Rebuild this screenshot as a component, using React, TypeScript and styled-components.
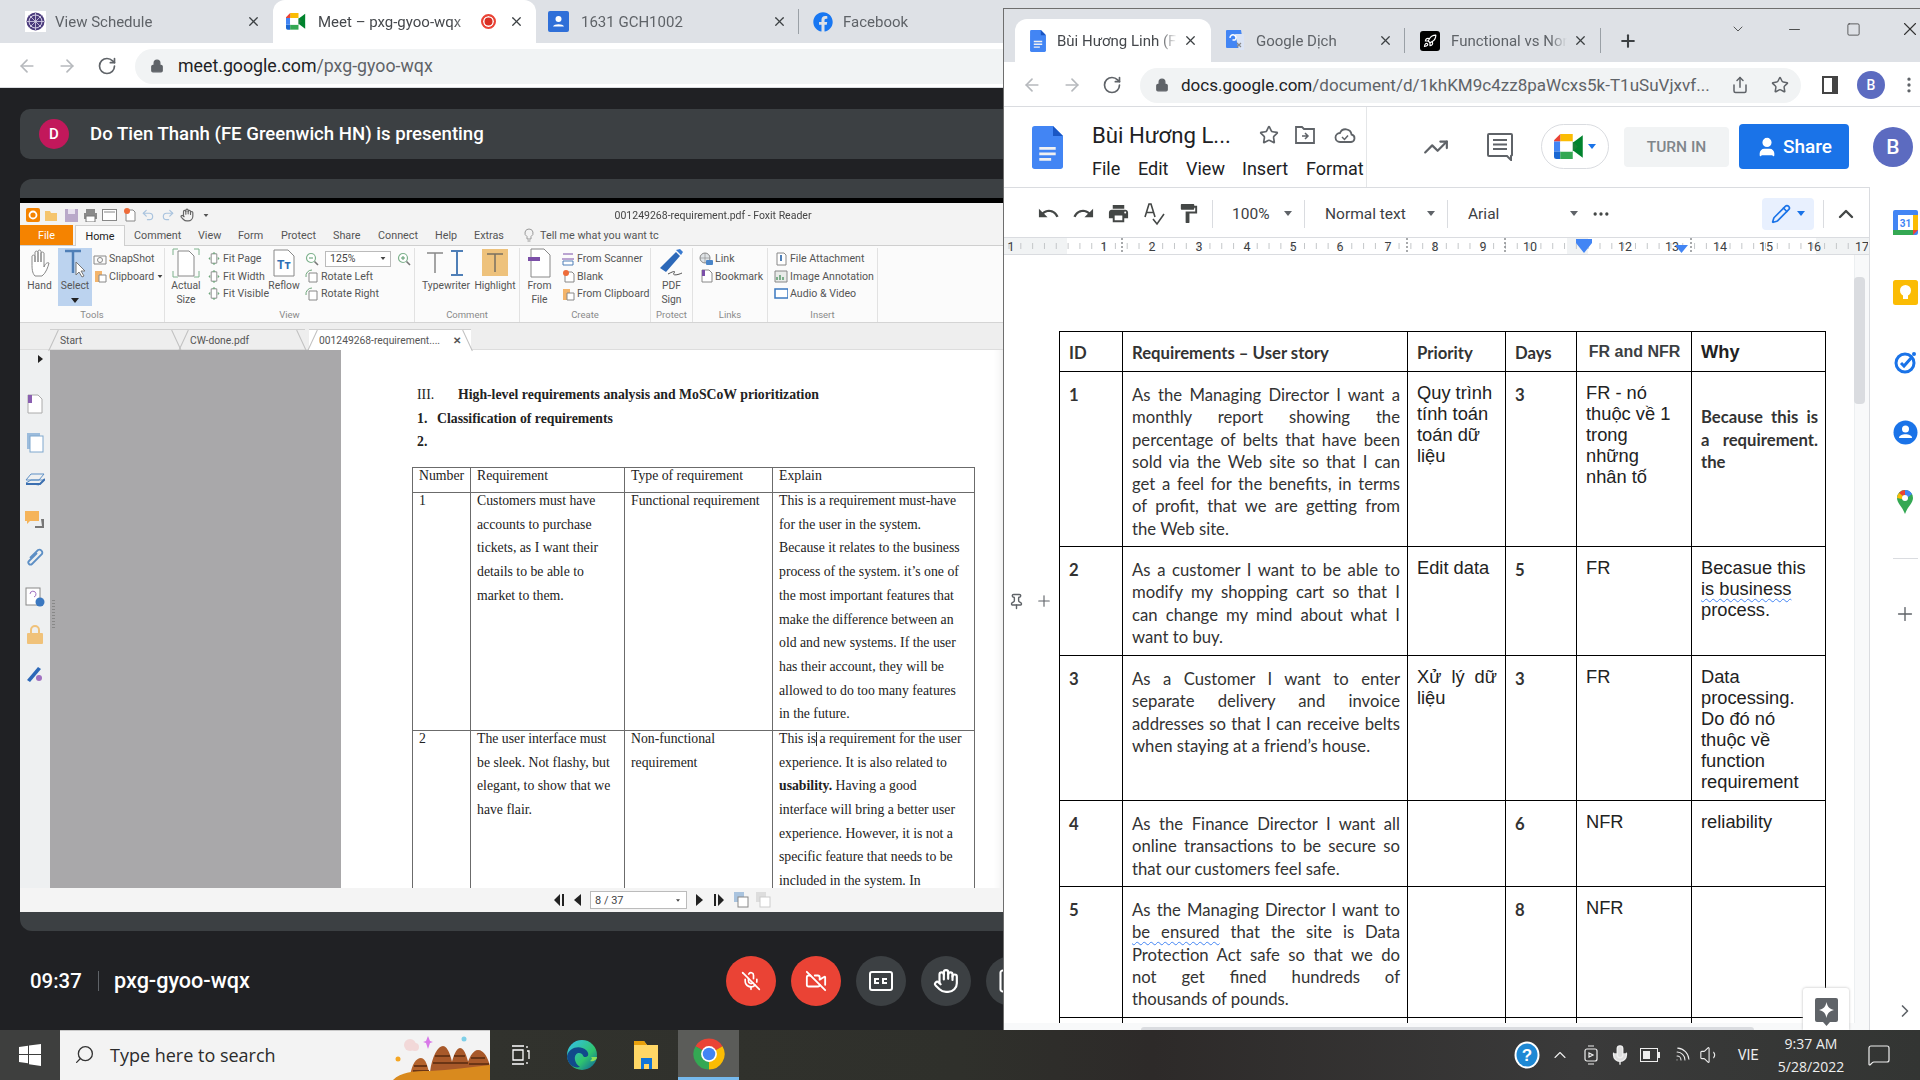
import React from "react";
import styled, { createGlobalStyle } from "styled-components";
import {
  ArrowLeft, ArrowRight, RotateCw, Lock, X, Plus, ChevronDown, ChevronUp, ChevronRight, Minus, Square, Star, Share,
  MoreVertical, MoreHorizontal, Undo2, Redo2, TrendingUp, MicOff, VideoOff, Hand, Pencil, Search, Pin,
  Rocket, User, Mic, Wifi, Volume1, MessageSquare,
} from "lucide-react";
import { FaFacebook } from "react-icons/fa";

const Global = createGlobalStyle`
  html, body { margin: 0; padding: 0; width: 1920px; height: 1080px; overflow: hidden; background: #202124; }
  * { box-sizing: border-box; }
  #root { width: 1920px; height: 1080px; font-family: Roboto, "Liberation Sans", sans-serif; }
`;

const Desktop = styled.div`position: relative; width: 1920px; height: 1080px; display: flex; flex-direction: column; overflow: hidden;`;
const WorkArea = styled.div`flex: 0 0 1030px; display: flex; flex-direction: column;`;

/* ---------- Chrome parts ---------- */
const TabStrip = styled.div<{ $h: number; $pl: number; $pt: number }>`
  height: ${p => p.$h}px; padding: ${p => p.$pt}px 0 0 ${p => p.$pl}px; background: #dee1e6; display: flex; align-items: stretch; flex: none;
`;
const Tab = styled.div<{ $w: number; $active?: boolean; $sep?: boolean; $fav: number; $close: number }>`
  position: relative; width: ${p => p.$w}px; display: flex; align-items: center; flex: none; padding-left: ${p => p.$fav}px; padding-right: ${p => p.$close}px;
  background: ${p => (p.$active ? "#fff" : "transparent")}; border-radius: 12px 12px 0 0;
  color: ${p => (p.$active ? "#45484c" : "#5f6368")}; font-size: 15px;
  ${p => p.$sep ? "&::after{content:'';position:absolute;right:0;top:9px;bottom:9px;width:1px;background:#9aa0a6;}" : ""}
`;
const TabTitle = styled.span<{ $gap: number }>`flex: 1; min-width: 0; margin-left: ${p => p.$gap}px; white-space: nowrap; overflow: hidden; -webkit-mask-image: linear-gradient(90deg, #000 85%, transparent); mask-image: linear-gradient(90deg, #000 85%, transparent);`;
const TabClose = styled(X).attrs({ size: 15, strokeWidth: 2 })`color: #3c4043; flex: none; margin-left: 6px;`;
const RecDot = styled.span`flex: none; width: 15px; height: 15px; border-radius: 50%; background: #d93025; border: 2px solid #ea4335; box-shadow: inset 0 0 0 1.5px #fff; margin: 0 7px 0 4px;`;
const NavBar = styled.div<{ $h: number; $pl: number }>`
  height: ${p => p.$h}px; flex: none; background: #fff; display: flex; align-items: center; padding: 2px 0 0 ${p => p.$pl}px; color: #5f6368; border-bottom: 1px solid #dadce0;
`;
const NavBtn = styled.span<{ $w: number; $faint?: boolean }>`
  width: ${p => p.$w}px; flex: none; display: flex; align-items: center; justify-content: center; color: ${p => (p.$faint ? "#b6b9bd" : "#5f6368")};
`;
const Omnibox = styled.div<{ $w: number; $ml: number }>`
  width: ${p => p.$w}px; margin-left: ${p => p.$ml}px; height: 35px; flex: none; border-radius: 18px; background: #f1f3f4; display: flex; align-items: center; padding-left: 15px; padding-right: 12px;
`;
const Url = styled.span<{ $ml: number; $fs: number }>`margin-left: ${p => p.$ml}px; font-size: ${p => p.$fs}px; color: #5f6368; white-space: nowrap; flex: 1; min-width: 0; overflow: hidden; b { font-weight: 400; color: #202124; }`;
const OmniEnd = styled.span<{ $ml?: number }>`display: flex; align-items: center; color: #5f6368; margin-left: ${p => p.$ml || 0}px;`;

/* ---------- Meet ---------- */
const MeetBody = styled.div`flex: 1; background: #202124; display: flex; flex-direction: column; padding: 21px 0 0 20px;`;
const PresenterBar = styled.div`
  height: 50px; flex: none; border-radius: 10px; background: #3c4043; display: flex; align-items: center; padding: 0 0 0 19px; color: #fff; font-size: 18.6px; font-weight: 500;
`;
const Avatar = styled.span<{ $bg: string; $size: number; $fs: number }>`
  width: ${p => p.$size}px; height: ${p => p.$size}px; flex: none; border-radius: 50%; background: ${p => p.$bg}; color: #fff; display: flex; align-items: center; justify-content: center; font-size: ${p => p.$fs}px; font-weight: 500;
`;
const PresenterText = styled.span`margin-left: 21px;`;
const SharePanel = styled.div`
  margin-top: 20px; height: 752px; flex: none; border-radius: 12px; background: #3c4043; padding: 19px 0 19px 0; overflow: hidden;
`;
const BottomBar = styled.div`flex: 1; display: flex; align-items: center; color: #fff; margin-left: -20px; padding-left: 30px;`;
const Clock = styled.span`font-size: 20.4px; font-weight: 500; width: 68px; flex: none;`;
const MeetDivider = styled.span`width: 1px; height: 20px; background: #5f6368; flex: none;`;
const MeetCode = styled.span`margin-left: 15px; font-size: 21.6px; font-weight: 500; width: 612px; flex: none; white-space: nowrap;`;
const RoundBtn = styled.span<{ $red?: boolean }>`
  width: 50px; height: 50px; flex: none; margin-right: 15px; border-radius: 50%; background: ${p => (p.$red ? "#ea4335" : "#3c4043")}; display: flex; align-items: center; justify-content: center; color: #fff;
`;

/* ---------- Foxit ---------- */
const FoxitWin = styled.div`
  height: 714px; border-top: 5px solid #000; background: #f3f3f3; display: flex; flex-direction: column; font-family: Roboto, sans-serif; color: #555; filter: blur(0.3px); width: 984px;
`;
const FoxTitleBar = styled.div`height: 22px; flex: none; display: flex; align-items: center; padding: 2px 0 0 3px; position: relative;`;
const QuickIcon = styled.span`width: 19.3px; display: flex; justify-content: center; flex: none;`;
const FoxTitle = styled.span`position: absolute; left: 0; width: 1386px; text-align: center; font-size: 10.5px; color: #444; white-space: nowrap;`;
const FoxMenu = styled.div`height: 21px; flex: none; display: flex; align-items: stretch; border-bottom: 1px solid #cfcfcf; font-size: 10.8px; color: #555;`;
const FileTab = styled.span`width: 53px; background: #f58300; color: #fff; display: flex; align-items: center; justify-content: center;`;
const HomeTab = styled.span`width: 50px; margin-left: 2px; background: #fbfbfb; border: 1px solid #cfcfcf; border-bottom: none; margin-bottom: -1px; display: flex; align-items: center; justify-content: center; color: #222;`;
const MenuItem = styled.span<{ $w: number }>`width: ${p => p.$w}px; flex: none; display: flex; align-items: center; padding-left: 9px;`;
const Ribbon = styled.div`height: 77px; flex: none; display: flex; background: #fbfbfb; border-bottom: 1px solid #d4d4d4;`;
const RGroup = styled.div<{ $w: number }>`width: ${p => p.$w}px; flex: none; display: flex; flex-direction: column; position: relative; border-right: 1px solid #e2e2e2; margin: 2px 0 0;`;
const RBody = styled.div`flex: none; height: 60px; display: flex; align-items: flex-start;`;
const RLabel = styled.div`height: 14px; font-size: 9.5px; color: #8a8a8a; text-align: center; line-height: 14px;`;
const BigBtn = styled.div<{ $w: number; $active?: boolean; $ml?: number }>`
  width: ${p => p.$w}px; margin-left: ${p => p.$ml || 0}px; height: 58px; flex: none; display: flex; flex-direction: column; align-items: center; font-size: 10.3px; line-height: 14px; color: #555; background: ${p => (p.$active ? "#bcd3ef" : "transparent")};
  text-align: center; white-space: nowrap; svg { height: 30px; flex: none; margin-bottom: 1px; }
`;
const SmallCol = styled.div<{ $w: number; $ml?: number }>`width: ${p => p.$w}px; margin-left: ${p => p.$ml || 0}px; flex: none; display: flex; flex-direction: column; padding-top: 2px;`;
const SmallRow = styled.div<{ $ic?: number }>`
  height: 17.6px; display: flex; align-items: center; font-size: 10.6px; color: #555; white-space: nowrap; gap: 2px;
  & > svg { width: ${p => p.$ic || 14}px; flex: none; }
`;
const ZoomSelect = styled.span`width: 66px; height: 16px; border: 1px solid #bbb; background: #fff; display: flex; align-items: center; justify-content: space-between; padding: 0 3px 0 4px; font-size: 10.5px; color: #444; margin: 0 4px;`;
const DocTabs = styled.div`height: 27px; flex: none; display: flex; align-items: flex-end; padding-left: 30px; background: #eeeeee; font-size: 10.3px; color: #555; border-bottom: 1px solid #ddd;`;
const DocTab = styled.span<{ $w: number; $active?: boolean; $ml?: number }>`
  position: relative; width: ${p => p.$w}px; height: 21px; margin-left: ${p => p.$ml || 0}px; flex: none; display: flex; align-items: center; padding-left: 10px; justify-content: space-between; padding-right: 10px; margin-bottom: -1px;
  background: ${p => (p.$active ? "#fff" : "transparent")}; white-space: nowrap;
  &::before { content: ""; position: absolute; left: 3px; top: -1px; height: 23px; width: 1px; background: #c0c0c0; transform: rotate(25deg); }
  &::after { content: ""; position: absolute; right: 3px; top: -1px; height: 23px; width: 1px; background: #c0c0c0; transform: rotate(-25deg); }
  border-top: 1px solid #cfcfcf;
`;
const Viewer = styled.div`flex: 1; min-height: 0; display: flex; overflow: hidden;`;
const FoxSide = styled.div`width: 30px; flex: none; background: #eef0f1; display: flex; flex-direction: column; align-items: center; padding-top: 5px;`;
const SideArrow = styled.span`width: 0; height: 0; border-left: 5px solid #222; border-top: 4px solid transparent; border-bottom: 4px solid transparent; margin: 0 0 22px 10px;`;
const SideIcon = styled.span`height: 38.5px; display: flex; align-items: center; justify-content: center; flex: none;`;
const GrayArea = styled.div`width: 291px; flex: none; background: #a9a8aa; position: relative; display: flex; align-items: center;`;
const GripDots = styled.span`width: 3px; height: 30px; margin-top: -8px; margin-left: 2px; background: repeating-linear-gradient(#888 0 1px, transparent 1px 3px);`;
const PdfPage = styled.div`flex: 1; min-width: 0; background: #fff; padding: 33px 0 0 70px; font-family: "Liberation Serif", serif; color: #222; font-size: 13.75px; overflow: hidden; box-shadow: inset -18px 0 10px -16px #e6e6e6;`;
const PdfHead = styled.div<{ $gap: number }>`height: 23.8px; display: flex; align-items: center; padding-left: 6px; font-weight: 700; white-space: nowrap; i { font-style: normal; font-weight: 400; width: ${p => p.$gap}px; flex: none; } b { width: ${p => p.$gap}px; flex: none; }`;
const PdfTable = styled.table`border-collapse: collapse; table-layout: fixed; width: 562px; margin: 13px 0 0 1px;`;
const PdfTd = styled.td`border: 1px solid #6b6b6b; padding: 0 5px 0 6px; vertical-align: top; white-space: nowrap;`;
const PdfRow = styled.tr<{ $h: number }>`height: ${p => p.$h}px;`;
const PdfLine = styled.span`display: block; height: 23.7px; line-height: 16px;`;
const ICursor = styled.span`display: inline-block; width: 1px; height: 14px; margin: 0 -1px -3px 0; background: #333;`;
const FoxStatus = styled.div`height: 24px; flex: none; background: #f4f4f4; display: flex; align-items: center; padding-left: 527px; color: #222;`;
const PageNav = styled.span<{ $w: number }>`width: ${p => p.$w}px; flex: none; display: flex; justify-content: center; align-items: center;`;
const PageSelect = styled.span`width: 97px; height: 18px; border: 1px solid #bbb; background: #fff; display: flex; align-items: center; justify-content: space-between; padding: 0 4px; font-size: 11px; color: #444; margin: 0 1px 0 3px;`;

/* ---------- Right window / Docs ---------- */
const RightWin = styled.div`
  position: absolute; left: 1003px; top: 8px; width: 917px; height: 1022px; display: flex; flex-direction: column; background: #fff; border-top: 1px solid #6e6e6e; border-left: 1px solid #6e6e6e; overflow: hidden;
`;
const NewTab = styled.span`margin-left: 17px; align-self: center; display: flex; color: #3c4043;`;
const WinCtl = styled.span<{ $ml: number }>`margin-left: ${p => p.$ml}px; align-self: flex-start; margin-top: -1px; height: 22px; display: flex; align-items: center; flex: none; color: #333;`;
const DocsHeader = styled.div`height: 81px; flex: none; display: flex; border-bottom: 1px solid #dadce0; background: #fff;`;
const DocsHeadLeft = styled.div`width: 363px; flex: none; display: flex; align-items: center; padding-left: 28px; border-right: 1px solid #e4e6e8; overflow: hidden;`;
const TitleBlock = styled.div`margin-left: 29px; padding-top: 5px; display: flex; flex-direction: column; flex: none;`;
const TitleRow = styled.div`display: flex; align-items: center; height: 34px; color: #202124; font-size: 22.2px; white-space: nowrap;`;
const TitleIcon = styled.span<{ $ml: number }>`margin-left: ${p => p.$ml}px; display: flex; color: #5f6368;`;
const MenuRow = styled.div`display: flex; margin-top: 4px; font-size: 18px; color: #202124; height: 26px; align-items: center;`;
const MenuWord = styled.span<{ $w: number }>`width: ${p => p.$w}px; flex: none;`;
const DocsHeadRight = styled.div`flex: 1; display: flex; align-items: center; padding-left: 56px; padding-bottom: 1px;`;
const HeadIcon = styled.span<{ $ml?: number }>`margin-left: ${p => p.$ml || 0}px; display: flex; color: #5f6368;`;
const MeetPill = styled.span`margin-left: 28px; width: 68px; height: 45px; border: 1px solid #dadce0; border-radius: 23px; display: flex; align-items: center; justify-content: center; gap: 4px; flex: none;`;
const CaretDown = styled.span<{ $c?: string }>`width: 0; height: 0; border-left: 4.5px solid transparent; border-right: 4.5px solid transparent; border-top: 5px solid ${p => p.$c || "#5f6368"}; flex: none;`;
const TurnIn = styled.span`margin-left: 15px; width: 105px; height: 40px; flex: none; border-radius: 4px; background: #f1f3f4; color: #80868b; display: flex; align-items: center; justify-content: center; font-size: 15.5px; font-weight: 500;`;
const ShareBtn = styled.span`margin-left: 10px; width: 110px; height: 45px; flex: none; border-radius: 4px; background: #1a73e8; color: #fff; display: flex; align-items: center; justify-content: center; gap: 5px; font-size: 19px; font-weight: 500;`;
const DocsMain = styled.div`flex: 1; min-height: 0; display: flex;`;
const DocsCol = styled.div`flex: 1; min-width: 0; display: flex; flex-direction: column;`;
const DocsToolbar = styled.div`height: 49px; flex: none; display: flex; align-items: center; padding: 2px 1px 0 27px; color: #444746; background: #fff;`;
const ToolBtn = styled.span<{ $w: number }>`width: ${p => p.$w}px; flex: none; display: flex; align-items: center; justify-content: center; color: #444746;`;
const ToolSep = styled.span<{ $ml?: number }>`width: 1px; height: 28px; background: #dadce0; flex: none; margin-left: ${p => p.$ml || 0}px;`;
const ToolSelect = styled.span<{ $w: number; $pl: number; $pr: number }>`
  width: ${p => p.$w}px; padding: 0 ${p => p.$pr}px 0 ${p => p.$pl}px; flex: none; display: flex; align-items: center; justify-content: space-between; font-size: 15.5px; color: #3c4043; white-space: nowrap;
`;
const PencilBox = styled.span`margin-left: auto; width: 52px; height: 32px; flex: none; background: #e8f0fe; border-radius: 4px; display: flex; align-items: center; justify-content: center; gap: 6px; color: #1a73e8;`;
const RulerBar = styled.div`height: 18px; flex: none; background: #f1f3f4; border-top: 1px solid #dadce0; border-bottom: 1px solid #dadce0;`;
const Scroller = styled.div`flex: 1; min-height: 0; position: relative; overflow: hidden; background: #fff; padding: 76px 0 0 55px;`;
const DocTable = styled.table`border-collapse: collapse; table-layout: fixed; width: 766px; color: #202124;`;
const Row = styled.tr<{ $h: number }>`height: ${p => p.$h}px;`;
const Cell = styled.td<{ $mid?: boolean }>`
  border: 1px solid #000; padding: 0; vertical-align: ${p => (p.$mid ? "middle" : "top")};
`;
const CalibriBox = styled.div<{ $bold?: boolean; $noPad?: boolean }>`
  font-family: Lato, sans-serif; font-size: 16.7px; line-height: 22.3px; padding: ${p => (p.$noPad ? "3px 8px 0 9px" : "12px 7px 0 9px")}; font-weight: ${p => (p.$bold ? 700 : 400)}; color: #333;
`;
const ArialBox = styled.div<{ $bold?: boolean; $center?: boolean; $noPad?: boolean; $size?: number; $gray?: boolean }>`
  font-family: "Liberation Sans", sans-serif; font-size: ${p => p.$size || 18.3}px; line-height: 21px; padding: ${p => (p.$noPad ? "0 8px 0 9px" : "10px 8px 0 9px")}; font-weight: ${p => (p.$bold ? 700 : 400)}; text-align: ${p => (p.$center ? "center" : "left")}; color: ${p => (p.$gray ? "#3c4043" : "#222")};
`;
const TLine = styled.span<{ $last?: boolean }>`display: block; text-align: ${p => (p.$last ? "left" : "justify")}; text-align-last: ${p => (p.$last ? "left" : "justify")};`;
const Squiggle = styled.span`text-decoration: underline wavy #4285f4 1px; text-underline-offset: 3px;`;
const ScrollThumb = styled.div`position: absolute; right: 4px; top: 22px; width: 11px; height: 127px; border-radius: 4px; background: #dadce0;`;
const ScrollTrack = styled.div`position: absolute; right: 0; top: 0; bottom: 0; width: 15px; background: #f8f9fa; border-left: 1px solid #eceff1;`;
const BottomTrack = styled.div`position: absolute; left: 0; right: 0; bottom: 0; height: 7px; background: #f8f9fa; display: flex; align-items: flex-end; padding-left: 137px;`;
const HThumb = styled.span`width: 613px; height: 3px; background: #dadce0; border-radius: 3px 3px 0 0;`;
const ExploreBtn = styled.div`position: absolute; right: 20px; bottom: 0; width: 46px; height: 42px; background: #fff; box-shadow: 0 0 3px #bbb; border-radius: 3px 3px 0 0; display: flex; justify-content: center; padding-top: 10px;`;
const GutterTools = styled.div`position: absolute; left: 4px; top: 337px; display: flex; align-items: center; gap: 10px; color: #5f6368;`;
const SidePanel = styled.div`width: 51px; flex: none; border-left: 1px solid #dadce0; display: flex; flex-direction: column; align-items: center; padding: 23px 0 0 20px; margin-top: -1px; background: #fff;`;
const SideApp = styled.span`height: 24px; margin-bottom: 46px; display: flex; align-items: center; justify-content: center; flex: none;`;
const SideDivider = styled.span`width: 25px; height: 1px; background: #dadce0; margin: -2px 0 43px; flex: none;`;
const SideChevron = styled.span`margin-top: auto; margin-bottom: 9px; display: flex; color: #5f6368;`;

/* ---------- Taskbar ---------- */
const Taskbar = styled.div`flex: 0 0 50px; display: flex; align-items: stretch; background: linear-gradient(90deg, #33342f 0%, #2f302b 50%, #2d2a29 60%, #3a3a3a 82%, #333533 100%); color: #fff;`;
const StartBtn = styled.span`width: 60px; flex: none; display: flex; align-items: center; justify-content: center; background: #3e3f3e;`;
const SearchBox = styled.div`width: 430px; flex: none; background: #f3f3f3; border-top: 1px solid #c8c8c8; display: flex; align-items: center; padding: 0 0 2px 14px; color: #333; font-size: 19px; position: relative; overflow: hidden;`;
const SearchText = styled.span`margin-left: 15px; font-family: "Open Sans", sans-serif; font-size: 18px; color: #2b2b2b;`;
const SearchArt = styled.span`position: absolute; right: 0; bottom: 0; display: flex;`;
const TaskApp = styled.span<{ $w: number; $active?: boolean }>`
  width: ${p => p.$w}px; flex: none; display: flex; align-items: center; justify-content: center; background: ${p => (p.$active ? "#5b5c59" : "transparent")}; border-bottom: ${p => (p.$active ? "3px solid #76b9ed" : "none")};
`;
const Tray = styled.div`margin-left: auto; display: flex; align-items: stretch; padding-right: 12px;`;
const TrayItem = styled.span<{ $w: number }>`width: ${p => p.$w}px; flex: none; display: flex; align-items: center; justify-content: center; color: #eee; font-size: 14px;`;
const TrayClock = styled.span`width: 78px; flex: none; display: flex; flex-direction: column; align-items: center; justify-content: center; gap: 5px; font-size: 14px; color: #eee; white-space: nowrap; font-family: "Open Sans", sans-serif; line-height: 18px;`;

/* ---------- Drawings ---------- */
const Sheet = styled.svg``;
const MeetLogo = ({ w = 24 }: { w?: number }) => (
  <Sheet width={w} height={(w * 20) / 24} viewBox="0 0 24 20">
    <path d="M5 0h10v6H5z" fill="#fbbc04" /><path d="M0 5 5 0v6H0z" fill="#ea4335" /><path d="M0 6h5v8H0z" fill="#4285f4" />
    <path d="M0 14h5v6H2a2 2 0 0 1-2-2z" fill="#1967d2" /><path d="M5 14h10v6H5z" fill="#34a853" />
    <path d="M15 7l8-6v18l-8-6z" fill="#00832d" /><rect x="5" y="6" width="10" height="8" fill="#fff" />
    <path d="M15 6v8l4-4z" fill="#188038" />
  </Sheet>
);
const DocsLogo = ({ w, h }: { w: number; h: number }) => (
  <Sheet width={w} height={h} viewBox="0 0 34 47">
    <path d="M3 0h20l11 11v33a3 3 0 0 1-3 3H3a3 3 0 0 1-3-3V3a3 3 0 0 1 3-3z" fill="#4285f4" /><path d="M23 0l11 11H23z" fill="#1a56c4" />
    <path d="M8 23h18v3H8zM8 29h18v3H8zM8 35h13v3H8z" fill="#f1f1f1" />
  </Sheet>
);
const ChromeLogo = ({ s = 32 }: { s?: number }) => (
  <Sheet width={s} height={s} viewBox="0 0 24 24">
    <path d="M12 12 2.47 6.5A11 11 0 0 1 21.53 6.5Z" fill="#ea4335" /><path d="M12 12 21.53 6.5A11 11 0 0 1 12 23Z" fill="#fbbc04" /><path d="M12 12 12 23A11 11 0 0 1 2.47 6.5Z" fill="#34a853" />
    <circle cx="12" cy="12" r="5.6" fill="#fff" /><circle cx="12" cy="12" r="4.4" fill="#4285f4" />
  </Sheet>
);
const WheelFav = () => (
  <Sheet width={21} height={21} viewBox="0 0 21 21"><rect width="21" height="21" fill="#fff" /><circle cx="10.5" cy="10.5" r="9" fill="#4a3a7c" /><circle cx="10.5" cy="10.5" r="6.5" fill="none" stroke="#d9d4ea" strokeWidth="1" /><path d="M10.5 2v17M2 10.5h17M4.5 4.5l12 12M16.5 4.5l-12 12" stroke="#d9d4ea" strokeWidth=".8" /></Sheet>
);
const ContactFav = () => (
  <Sheet width={21} height={21} viewBox="0 0 21 21"><rect width="21" height="21" rx="2" fill="#2f6fd8" /><circle cx="10.5" cy="8" r="3" fill="#fff" /><path d="M5 15.5c1-3 10-3 11 0z" fill="#fff" /></Sheet>
);
const TranslateFav = () => (
  <Sheet width={19} height={22} viewBox="0 0 19 22"><path d="M1 0h14l3 18H1a1 1 0 0 1-1-1V1a1 1 0 0 1 1-1z" fill="#4285f4" /><path d="M9 4h8a1 1 0 0 1 1 1v15l-5 0z" fill="#dbe4f5" /><path d="M4 8a3 3 0 1 1 5 2H6.5" fill="none" stroke="#fff" strokeWidth="1.4" /><path d="M11 13l4 4M15 13l-4 4" stroke="#888" strokeWidth="1.1" /></Sheet>
);
const PanelIcon = () => (<Sheet width={18} height={20} viewBox="0 0 18 20"><path d="M1 1h16v18H1zM3 3v14h8V3z" fill="#444" fillRule="evenodd" /></Sheet>);
const CommentIcon = () => (<Sheet width={26} height={28} viewBox="0 0 26 28"><path d="M2 1h22a1 1 0 0 1 1 1v20l-1 1v4l-4-4H2a1 1 0 0 1-1-1V2a1 1 0 0 1 1-1z" fill="none" stroke="#5f6368" strokeWidth="2" /><path d="M6 7h14M6 11.5h14M6 16h14" stroke="#5f6368" strokeWidth="2" /></Sheet>);
const SpellIcon = () => (<Sheet width={22} height={24} viewBox="0 0 22 24"><path d="M2 15 6 2h2l4 13M3.5 10.5h7M10 17l4 5 7-10" fill="none" stroke="#444746" strokeWidth="1.6" /></Sheet>);
const Mat = ({ d }: { d: string }) => (<Sheet width={23} height={23} viewBox="0 0 24 24"><path d={d} fill="#444746" /></Sheet>);
const UNDO = "M12.5 8c-2.65 0-5.05.99-6.9 2.6L2 7v9h9l-3.62-3.62c1.39-1.16 3.16-1.88 5.12-1.88 3.54 0 6.55 2.31 7.6 5.5l2.37-.78C21.08 11.03 17.15 8 12.5 8z";
const REDO = "M18.4 10.6C16.55 8.99 14.15 8 11.5 8c-4.65 0-8.58 3.03-9.96 7.22L3.9 16c1.05-3.19 4.05-5.5 7.6-5.5 1.95 0 3.73.72 5.12 1.88L13 16h9V7l-3.6 3.6z";
const PRINT = "M19 8H5c-1.66 0-3 1.34-3 3v6h4v4h12v-4h4v-6c0-1.66-1.34-3-3-3zm-3 11H8v-5h8v5zm3-7c-.55 0-1-.45-1-1s.45-1 1-1 1 .45 1 1-.45 1-1 1zm-1-9H6v4h12V3z";
const PAINT = "M18 4V3c0-.55-.45-1-1-1H5c-.55 0-1 .45-1 1v4c0 .55.45 1 1 1h12c.55 0 1-.45 1-1V6h1v4H9v11c0 .55.45 1 1 1h2c.55 0 1-.45 1-1v-9h8V4h-3z";
const RulerSvg = () => {
  const nums: [string, number][] = [["1", 7], ["1", 100], ["2", 148], ["3", 195], ["4", 243], ["5", 289], ["6", 336], ["7", 384], ["8", 431], ["9", 479], ["10", 526], ["12", 621], ["13", 668], ["14", 716], ["15", 762], ["16", 810], ["17", 858]];
  const ticks = Array.from({ length: 72 }, (_, i) => 5 + i * 11.82);
  return (
    <Sheet width={864} height={16} viewBox="0 0 864 16" style={{ display: "block" }}>
      <rect x="63" y="0" width="749" height="16" fill="#fff" /><rect x="563" width="21" height="16" fill="#f1f3f4" />
      {ticks.map(t => <path key={t} d={`M${t} 5v6`} stroke="#c4c7c9" strokeWidth="1" />)}
      {[118, 403, 501, 687].map(x => <path key={x} d={`M${x} 0v16`} stroke="#8a8d90" strokeWidth="1.5" strokeDasharray="2 2" />)}
      {nums.map(([n, x], i) => <text key={i} x={x} y="13" textAnchor="middle" fontFamily="Roboto, sans-serif" fontSize="12.5" fill="#3c4043">{n}</text>)}
      <path d="M572 1h16v4h-16zM572 5h16l-8 10z" fill="#4285f4" /><path d="M671 7h13l-6.500 8z" fill="#4285f4" />
    </Sheet>
  );
};
const Ic = {
  Hand: () => <svg width="28" viewBox="0 0 28 30"><path d="M6 16V8a1.700 1.700 0 0 1 3 0v6V4a1.700 1.700 0 0 1 3 0v10V3a1.700 1.700 0 0 1 3 0v11V5a1.700 1.700 0 0 1 3 0v14c1-3 3-5 5-4-1 4-3 10-7 13h-7c-3-3-3-8-3-12z" fill="#fff" stroke="#888" strokeWidth="1" /></svg>,
  Select: () => <svg width="28" viewBox="0 0 28 30"><path d="M4 3h16M12 3v22" stroke="#4f7fb7" strokeWidth="2.500" fill="none" /><path d="M15 14v13l3-3 3 5 2-1-3-5h4z" fill="#fff" stroke="#777" /></svg>,
  Page: () => <svg width="28" viewBox="0 0 28 30"><path d="M6 3h11l5 5v20H6z" fill="#fff" stroke="#888" /><path d="M1 7V1h5M27 7V1h-5M1 23v6h5M27 23v6h-5" stroke="#7fb28d" fill="none" /></svg>,
  Reflow: () => <svg width="28" viewBox="0 0 28 30"><path d="M4 2h14l6 6v20H4z" fill="#fff" stroke="#888" /><text x="7" y="21" fontSize="12" fontWeight="700" fill="#2e6fb5" fontFamily="Roboto">Tт</text></svg>,
  Typewriter: () => <svg width="44" viewBox="0 0 44 30"><path d="M3 5h16M11 5v20" stroke="#888" strokeWidth="1.500" /><path d="M27 3h12M27 27h12M33 3v24" stroke="#4f7fb7" strokeWidth="2" /></svg>,
  Highlight: () => <svg width="28" viewBox="0 0 28 30"><rect x="1" y="1" width="26" height="27" fill="#eec27c" /><path d="M6 6h16M14 6v18" stroke="#7a7060" strokeWidth="1.500" /></svg>,
  FromFile: () => <svg width="24" viewBox="0 0 24 30"><path d="M3 1h13l6 6v22H3z" fill="#fff" stroke="#888" /><rect x="0" y="9" width="12" height="4" fill="#7b4fa8" /></svg>,
  PdfSign: () => <svg width="28" viewBox="0 0 28 30"><path d="M2 20 18 4l4 4L8 24z" fill="#2c68b8" /><path d="M18 2l4-1 3 3-2 3z" fill="#3a7bd0" /><path d="M10 26c4-2 8-4 6-1s4 2 8 0" stroke="#555" fill="none" /></svg>,
  Snap: () => <svg viewBox="0 0 14 12" height="12"><path d="M1 3h12v8H1z" fill="none" stroke="#888" /><circle cx="7" cy="7" r="2.500" fill="none" stroke="#888" /></svg>,
  Clip: () => <svg viewBox="0 0 14 14" height="14"><path d="M2 2h7v11H2z" fill="#f3b46b" /><path d="M6 6h7v7H6z" fill="#fff" stroke="#888" /></svg>,
  Fit: () => <svg viewBox="0 0 14 14" height="13"><path d="M4 2h6v10H4z" fill="#fff" stroke="#888" /><path d="M1 7l2-2v4zM13 7l-2-2v4zM7 0l2 2H5zM7 14l2-2H5z" fill="#6fa67c" /></svg>,
  Rot: () => <svg viewBox="0 0 14 14" height="14"><path d="M4 4h8v9H4z" fill="#fff" stroke="#888" /><path d="M1 8a6 6 0 0 1 6-7" stroke="#6fa67c" fill="none" /></svg>,
  Zoom: ({ plus }: { plus?: boolean }) => <svg viewBox="0 0 14 14" width="14" height="14"><circle cx="6" cy="6" r="4.500" fill="#fff" stroke="#7eb28d" strokeWidth="1.200" /><path d="M9.500 9.500 13 13" stroke="#777" strokeWidth="1.600" /><path d={plus ? "M4 6h4M6 4v4" : "M4 6h4"} stroke="#5a9a6c" /></svg>,
  Scan: () => <svg viewBox="0 0 14 14" height="14"><path d="M2 2h10M1 7h12" stroke="#7b4fa8" /><path d="M2 9h10v4H2z" fill="#fff" stroke="#4f7fb7" /></svg>,
  Blank: () => <svg viewBox="0 0 14 14" height="14"><path d="M4 3h7l2 2v8H4z" fill="#fff" stroke="#888" /><circle cx="5" cy="4" r="3" fill="#ee6c3a" /></svg>,
  Link: () => <svg viewBox="0 0 14 14" height="14"><circle cx="6" cy="6" r="5" fill="#dfe3e6" stroke="#888" /><path d="M6 1v10M1 6h10" stroke="#888" strokeWidth=".6" /><rect x="7" y="8" width="7" height="5" rx="1" fill="#4a85c8" /></svg>,
  Mark: () => <svg viewBox="0 0 14 14" height="14"><path d="M3 1h7l3 3v9H3z" fill="#fff" stroke="#888" /><rect x="3" y="1" width="3" height="6" fill="#7b4fa8" /></svg>,
  Attach: () => <svg viewBox="0 0 14 14" height="14"><path d="M3 1h7l2 2v10H3z" fill="#fff" stroke="#888" /><path d="M7 3v6" stroke="#4f7fb7" strokeWidth="2" /></svg>,
  Img: () => <svg viewBox="0 0 14 14" height="14"><path d="M1 2h12v11H1z" fill="#e9ebe9" stroke="#888" /><path d="M3 11V8M6 11V6M9 11V8" stroke="#5a9a6c" strokeWidth="1.500" /></svg>,
  Av: () => <svg viewBox="0 0 14 14" height="14"><rect x="1" y="2" width="13" height="9" fill="#fff" stroke="#3b78c0" strokeWidth="1.500" /></svg>,
};

const body = (lines: React.ReactNode[]) => lines.map((l, i) => <TLine key={i} $last={i === lines.length - 1}>{l}</TLine>);
const pdfLines = (lines: React.ReactNode[]) => lines.map((l, i) => <PdfLine key={i}>{l}</PdfLine>);

const RibbonSection = () => (
  <Ribbon>
    <RGroup $w={145}>
      <RBody>
        <BigBtn $w={37} $ml={1}><Ic.Hand />Hand</BigBtn>
        <BigBtn $w={34} $active><Ic.Select />Select<CaretDown $c="#222" style={{ marginTop: 5 }} /></BigBtn>
        <SmallCol $w={70} $ml={1}>
          <SmallRow $ic={14}><Ic.Snap /> SnapShot</SmallRow>
          <SmallRow $ic={14}><Ic.Clip /> Clipboard <CaretDown $c="#444" style={{ transform: "scale(.6)" }} /></SmallRow>
        </SmallCol>
      </RBody>
      <RLabel>Tools</RLabel>
    </RGroup>
    <RGroup $w={250}>
      <RBody>
        <BigBtn $w={42}><Ic.Page />Actual<br />Size</BigBtn>
        <SmallCol $w={60}>
          <SmallRow><Ic.Fit /> Fit Page</SmallRow><SmallRow><Ic.Fit /> Fit Width</SmallRow><SmallRow><Ic.Fit /> Fit Visible</SmallRow>
        </SmallCol>
        <BigBtn $w={34}><Ic.Reflow />Reflow</BigBtn>
        <SmallCol $w={112} $ml={4}>
          <SmallRow><Ic.Zoom /><ZoomSelect>125%<CaretDown $c="#444" style={{ transform: "scale(.6)" }} /></ZoomSelect><Ic.Zoom plus /></SmallRow>
          <SmallRow><Ic.Rot /> Rotate Left</SmallRow><SmallRow><Ic.Rot /> Rotate Right</SmallRow>
        </SmallCol>
      </RBody>
      <RLabel>View</RLabel>
    </RGroup>
    <RGroup $w={105}>
      <RBody>
        <BigBtn $w={62}><Ic.Typewriter />Typewriter</BigBtn>
        <BigBtn $w={36}><Ic.Highlight />Highlight</BigBtn>
      </RBody>
      <RLabel>Comment</RLabel>
    </RGroup>
    <RGroup $w={131}>
      <RBody>
        <BigBtn $w={39}><Ic.FromFile />From<br />File</BigBtn>
        <SmallCol $w={90} $ml={2}>
          <SmallRow><Ic.Scan /> From Scanner</SmallRow><SmallRow><Ic.Blank /> Blank</SmallRow><SmallRow><Ic.Clip /> From Clipboard</SmallRow>
        </SmallCol>
      </RBody>
      <RLabel>Create</RLabel>
    </RGroup>
    <RGroup $w={42}>
      <RBody><BigBtn $w={41}><Ic.PdfSign />PDF<br />Sign</BigBtn></RBody>
      <RLabel>Protect</RLabel>
    </RGroup>
    <RGroup $w={75}>
      <RBody><SmallCol $w={72} $ml={6}><SmallRow><Ic.Link /> Link</SmallRow><SmallRow><Ic.Mark /> Bookmark</SmallRow></SmallCol></RBody>
      <RLabel>Links</RLabel>
    </RGroup>
    <RGroup $w={110}>
      <RBody><SmallCol $w={105} $ml={6}><SmallRow><Ic.Attach /> File Attachment</SmallRow><SmallRow><Ic.Img /> Image Annotation</SmallRow><SmallRow><Ic.Av /> Audio &amp; Video</SmallRow></SmallCol></RBody>
      <RLabel>Insert</RLabel>
    </RGroup>
  </Ribbon>
);

const FoxitSection = () => (
  <FoxitWin>
    <FoxTitleBar>
      <QuickIcon><svg width="14" height="14" viewBox="0 0 14 14"><rect width="14" height="14" rx="2" fill="#f58300" /><circle cx="7" cy="7" r="3.500" fill="none" stroke="#fff" strokeWidth="1.800" /></svg></QuickIcon>
      <QuickIcon><svg width="15" height="13" viewBox="0 0 15 13"><path d="M1 2h5l1 2h6v8H1z" fill="#f5c56e" /></svg></QuickIcon>
      <QuickIcon><svg width="13" height="13" viewBox="0 0 13 13"><rect width="13" height="13" fill="#b9a9c9" /><rect x="3" width="7" height="5" fill="#e8e2ef" /></svg></QuickIcon>
      <QuickIcon><svg width="15" height="13" viewBox="0 0 15 13"><path d="M3 0h9v4H3zM1 4h13v6H1z" fill="#8a8a8a" /><path d="M3 7h9v6H3z" fill="#fff" stroke="#777" /></svg></QuickIcon>
      <QuickIcon><svg width="15" height="12" viewBox="0 0 15 12"><rect x=".5" y=".5" width="14" height="11" fill="#fff" stroke="#888" /><path d="M2 3h11" stroke="#888" /></svg></QuickIcon>
      <QuickIcon><svg width="13" height="14" viewBox="0 0 13 14"><path d="M3 2h7l2 2v9H3z" fill="#fff" stroke="#888" /><circle cx="4" cy="3" r="3" fill="#ee6c3a" /></svg></QuickIcon>
      <QuickIcon><Undo2 size={14} color="#a9c3de" /></QuickIcon>
      <QuickIcon><Redo2 size={14} color="#a9c3de" /></QuickIcon>
      <QuickIcon><Hand size={14} color="#666" /></QuickIcon>
      <QuickIcon><CaretDown $c="#555" style={{ transform: "scale(.6)" }} /></QuickIcon>
      <FoxTitle>001249268-requirement.pdf - Foxit Reader</FoxTitle>
    </FoxTitleBar>
    <FoxMenu>
      <FileTab>File</FileTab><HomeTab>Home</HomeTab>
      <MenuItem $w={64}>Comment</MenuItem><MenuItem $w={40}>View</MenuItem><MenuItem $w={43}>Form</MenuItem><MenuItem $w={52}>Protect</MenuItem><MenuItem $w={45}>Share</MenuItem><MenuItem $w={57}>Connect</MenuItem><MenuItem $w={39}>Help</MenuItem><MenuItem $w={50}>Extras</MenuItem>
      <MenuItem $w={220}>
        <svg width="10" height="14" viewBox="0 0 10 14" style={{ marginRight: 6 }}><path d="M5 1a4 4 0 0 0-2 7.500V11h4V8.500A4 4 0 0 0 5 1zM3.500 13h3" fill="none" stroke="#999" /></svg>
        Tell me what you want tc
      </MenuItem>
    </FoxMenu>
    <RibbonSection />
    <DocTabs>
      <DocTab $w={130}>Start</DocTab>
      <DocTab $w={125}>CW-done.pdf</DocTab>
      <DocTab $w={162} $active $ml={4}>001249268-requirement....<b>✕</b></DocTab>
    </DocTabs>
    <Viewer>
      <FoxSide>
        <SideArrow />
        <SideIcon><svg width="16" height="20" viewBox="0 0 16 20"><path d="M1 1h10l4 4v14H1z" fill="#fff" stroke="#aaa" /><rect x="1" y="1" width="4" height="8" fill="#8a5fb0" /></svg></SideIcon>
        <SideIcon><svg width="17" height="20" viewBox="0 0 17 20"><rect width="13" height="16" fill="#9cbcdc" /><rect x="3" y="3" width="13" height="16" fill="#fff" stroke="#7ea7ce" /></svg></SideIcon>
        <SideIcon><svg width="20" height="18" viewBox="0 0 20 18"><path d="M1 8 6 2h13l-5 6zM1 11l5-3h13l-5 5z" fill="none" stroke="#5d8fc5" /><path d="M1 12h14l5-5" stroke="#3b6fb0" strokeWidth="2" fill="none" /></svg></SideIcon>
        <SideIcon><svg width="20" height="18" viewBox="0 0 20 18"><path d="M0 0h14v10H5l-3 3v-3H0z" fill="#f5b45a" /><path d="M16 8h3v9h-9v-2h7z" fill="#777" /></svg></SideIcon>
        <SideIcon><svg width="18" height="20" viewBox="0 0 18 20"><path d="M4 10 12 2a3 3 0 0 1 4 4L6 16a2 2 0 0 1-3-3l8-8" fill="none" stroke="#5d8fc5" strokeWidth="1.800" /></svg></SideIcon>
        <SideIcon><svg width="20" height="20" viewBox="0 0 20 20"><rect x="1" y="1" width="14" height="17" fill="#fff" stroke="#888" /><path d="M5 7a3 3 0 1 1 4 3" stroke="#a070c0" fill="none" /><circle cx="15" cy="15" r="4.500" fill="#3b78c0" /></svg></SideIcon>
        <SideIcon><svg width="16" height="20" viewBox="0 0 16 20"><path d="M4 8V5a4 4 0 0 1 8 0v3" fill="none" stroke="#f0c27a" strokeWidth="2" /><rect y="8" width="16" height="11" rx="1" fill="#f0c27a" /></svg></SideIcon>
        <SideIcon><svg width="18" height="20" viewBox="0 0 18 20"><path d="M1 16 12 3l3 2L4 18z" fill="#2c68b8" /><circle cx="13" cy="14" r="3" fill="#a070c0" /></svg></SideIcon>
      </FoxSide>
      <GrayArea><GripDots /></GrayArea>
      <PdfPage>
        <PdfHead $gap={41}><i>III.</i>High-level requirements analysis and MoSCoW prioritization</PdfHead>
        <PdfHead $gap={20}><b>1.</b>Classification of requirements</PdfHead>
        <PdfHead $gap={20}><b>2.</b></PdfHead>
        <PdfTable>
          <colgroup><col style={{ width: 58 }} /><col style={{ width: 154 }} /><col style={{ width: 148 }} /><col style={{ width: 202 }} /></colgroup>
          <tbody>
            <PdfRow $h={24}><PdfTd><PdfLine>Number</PdfLine></PdfTd><PdfTd><PdfLine>Requirement</PdfLine></PdfTd><PdfTd><PdfLine>Type of requirement</PdfLine></PdfTd><PdfTd><PdfLine>Explain</PdfLine></PdfTd></PdfRow>
            <PdfRow $h={237}>
              <PdfTd><PdfLine>1</PdfLine></PdfTd>
              <PdfTd>{pdfLines(["Customers must have", "accounts to purchase", "tickets, as I want their", "details to be able to", "market to them."])}</PdfTd>
              <PdfTd><PdfLine>Functional requirement</PdfLine></PdfTd>
              <PdfTd>{pdfLines(["This is a requirement must-have", "for the user in the system.", "Because it relates to the business", "process of the system. it’s one of", "the most important features that", "make the difference between an", "old and new systems. If the user", "has their account, they will be", "allowed to do too many features", "in the future."])}</PdfTd>
            </PdfRow>
            <PdfRow $h={237}>
              <PdfTd><PdfLine>2</PdfLine></PdfTd>
              <PdfTd>{pdfLines(["The user interface must", "be sleek. Not flashy, but", "elegant, to show that we", "have flair."])}</PdfTd>
              <PdfTd>{pdfLines(["Non-functional", "requirement"])}</PdfTd>
              <PdfTd>{pdfLines([<>This is<ICursor /> a requirement for the user</>, "experience. It is also related to", <><b>usability.</b> Having a good</>, "interface will bring a better user", "experience. However, it is not a", "specific feature that needs to be", "included in the system. In"])}</PdfTd>
            </PdfRow>
          </tbody>
        </PdfTable>
      </PdfPage>
    </Viewer>
    <FoxStatus>
      <PageNav $w={20}><svg width="13" height="12" viewBox="0 0 13 12"><path d="M11 0h2v12h-2zM9 0v12L3 6z" fill="#222" /></svg></PageNav>
      <PageNav $w={20}><svg width="7" height="12" viewBox="0 0 7 12"><path d="M7 0v12L0 6z" fill="#222" /></svg></PageNav>
      <PageSelect>8 / 37<CaretDown $c="#444" style={{ transform: "scale(.5)" }} /></PageSelect>
      <PageNav $w={22}><svg width="7" height="12" viewBox="0 0 7 12"><path d="M0 0v12l7-6z" fill="#222" /></svg></PageNav>
      <PageNav $w={20}><svg width="13" height="12" viewBox="0 0 13 12"><path d="M0 0h2v12H0zM4 0v12l6-6z" fill="#222" /></svg></PageNav>
      <PageNav $w={22}><svg width="15" height="16" viewBox="0 0 15 16"><rect width="10" height="10" fill="#a9c3de" /><rect x="4" y="5" width="10" height="10" fill="#fff" stroke="#888" /></svg></PageNav>
      <PageNav $w={22}><svg width="15" height="16" viewBox="0 0 15 16"><rect width="10" height="10" fill="#ddd" /><rect x="4" y="5" width="10" height="10" fill="#fff" stroke="#ccc" /></svg></PageNav>
    </FoxStatus>
  </FoxitWin>
);

const DocsTable = () => (
  <DocTable>
    <colgroup><col style={{ width: 63 }} /><col style={{ width: 285 }} /><col style={{ width: 98 }} /><col style={{ width: 71 }} /><col style={{ width: 115 }} /><col style={{ width: 134 }} /></colgroup>
    <tbody>
      <Row $h={40}>
        <Cell $mid><CalibriBox $bold $noPad>ID</CalibriBox></Cell>
        <Cell $mid><CalibriBox $bold $noPad>Requirements – User story</CalibriBox></Cell>
        <Cell $mid><CalibriBox $bold $noPad>Priority</CalibriBox></Cell>
        <Cell $mid><CalibriBox $bold $noPad>Days</CalibriBox></Cell>
        <Cell $mid><ArialBox $bold $noPad $center $size={16} $gray>FR and NFR</ArialBox></Cell>
        <Cell $mid><ArialBox $bold $noPad>Why</ArialBox></Cell>
      </Row>
      <Row $h={175}>
        <Cell><CalibriBox $bold>1</CalibriBox></Cell>
        <Cell><CalibriBox>{body(["As the Managing Director I want a", "monthly report showing the", "percentage of belts that have been", "sold via the Web site so that I can", "get a feel for the benefits, in terms", "of profit, that we are getting from", "the Web site."])}</CalibriBox></Cell>
        <Cell><ArialBox>Quy trình<br />tính toán<br />toán dữ<br />liệu</ArialBox></Cell>
        <Cell><CalibriBox $bold>3</CalibriBox></Cell>
        <Cell><ArialBox>FR - nó<br />thuộc về 1<br />trong<br />những<br />nhân tố</ArialBox></Cell>
        <Cell><CalibriBox $bold><TLine $last>&nbsp;</TLine><TLine>Because this is</TLine><TLine>a requirement.</TLine><TLine $last>the</TLine></CalibriBox></Cell>
      </Row>
      <Row $h={109}>
        <Cell><CalibriBox $bold>2</CalibriBox></Cell>
        <Cell><CalibriBox>{body(["As a customer I want to be able to", "modify my shopping cart so that I", "can change my mind about what I", "want to buy."])}</CalibriBox></Cell>
        <Cell><ArialBox>Edit data</ArialBox></Cell>
        <Cell><CalibriBox $bold>5</CalibriBox></Cell>
        <Cell><ArialBox>FR</ArialBox></Cell>
        <Cell><ArialBox>Becasue this<br /><Squiggle>is business</Squiggle><br />process.</ArialBox></Cell>
      </Row>
      <Row $h={145}>
        <Cell><CalibriBox $bold>3</CalibriBox></Cell>
        <Cell><CalibriBox>{body(["As a Customer I want to enter", "separate delivery and invoice", "addresses so that I can receive belts", "when staying at a friend’s house."])}</CalibriBox></Cell>
        <Cell><ArialBox><TLine>Xử lý dữ</TLine><TLine $last>liệu</TLine></ArialBox></Cell>
        <Cell><CalibriBox $bold>3</CalibriBox></Cell>
        <Cell><ArialBox>FR</ArialBox></Cell>
        <Cell><ArialBox>Data<br />processing.<br />Do đó nó<br />thuộc về<br />function<br />requirement</ArialBox></Cell>
      </Row>
      <Row $h={86}>
        <Cell><CalibriBox $bold>4</CalibriBox></Cell>
        <Cell><CalibriBox>{body(["As the Finance Director I want all", "online transactions to be secure so", "that our customers feel safe."])}</CalibriBox></Cell>
        <Cell />
        <Cell><CalibriBox $bold>6</CalibriBox></Cell>
        <Cell><ArialBox>NFR</ArialBox></Cell>
        <Cell><ArialBox>reliability</ArialBox></Cell>
      </Row>
      <Row $h={131}>
        <Cell><CalibriBox $bold>5</CalibriBox></Cell>
        <Cell><CalibriBox>{body(["As the Managing Director I want to", <><Squiggle>be ensured</Squiggle> that the site is Data</>, "Protection Act safe so that we do", "not get fined hundreds of", "thousands of pounds."])}</CalibriBox></Cell>
        <Cell />
        <Cell><CalibriBox $bold>8</CalibriBox></Cell>
        <Cell><ArialBox>NFR</ArialBox></Cell>
        <Cell />
      </Row>
      <Row $h={60}><Cell /><Cell /><Cell /><Cell /><Cell /><Cell /></Row>
    </tbody>
  </DocTable>
);

const RightWindow = () => (
  <RightWin>
    <TabStrip $h={53} $pl={11} $pt={10}>
      <Tab $w={196} $active $fav={13} $close={13}><DocsLogo w={20} h={22} /><TabTitle $gap={9}>Bùi Hương Linh (FE</TabTitle><TabClose /></Tab>
      <Tab $w={194} $sep $fav={15} $close={12}><TranslateFav /><TabTitle $gap={11}>Google Dịch</TabTitle><TabClose /></Tab>
      <Tab $w={196} $sep $fav={15} $close={13}>
        <Sheet width={20} height={20} viewBox="0 0 20 20"><rect width="20" height="20" rx="3" fill="#000" /></Sheet>
        <Rocket size={14} color="#fff" style={{ marginLeft: -17, marginRight: 3 }} />
        <TabTitle $gap={11}>Functional vs Non-Functional</TabTitle><TabClose />
      </Tab>
      <NewTab><Plus size={20} strokeWidth={2.5} /></NewTab>
      <WinCtl $ml={92}><ChevronDown size={16} strokeWidth={1.2} /></WinCtl>
      <WinCtl $ml={40}><Minus size={17} strokeWidth={1.2} /></WinCtl>
      <WinCtl $ml={43}><Square size={15} strokeWidth={1.2} /></WinCtl>
      <WinCtl $ml={38}><X size={22} strokeWidth={1.2} /></WinCtl>
    </TabStrip>
    <NavBar $h={45} $pl={8}>
      <NavBtn $w={40} $faint><ArrowLeft size={20} /></NavBtn>
      <NavBtn $w={40} $faint><ArrowRight size={20} /></NavBtn>
      <NavBtn $w={40}><RotateCw size={20} /></NavBtn>
      <Omnibox $w={661} $ml={8}>
        <Lock size={14} fill="#5f6368" color="#5f6368" />
        <Url $ml={12} $fs={17.05}><b>docs.google.com</b>/document/d/1khKM9c4zz8paWcxs5k-T1uSuVjxvf...</Url>
        <OmniEnd $ml={8}><Share size={18} /></OmniEnd>
        <OmniEnd $ml={22}><Star size={18} /></OmniEnd>
      </Omnibox>
      <NavBtn $w={50} style={{ marginLeft: 4 }}><PanelIcon /></NavBtn>
      <Avatar $bg="#5c6bc0" $size={28} $fs={14} style={{ marginLeft: 2 }}>B</Avatar>
      <NavBtn $w={40} style={{ marginLeft: 4 }}><MoreVertical size={20} /></NavBtn>
    </NavBar>
    <DocsHeader>
      <DocsHeadLeft>
        <DocsLogo w={34} h={47} />
        <TitleBlock>
          <TitleRow>Bùi Hương L...
            <TitleIcon $ml={28}><Star size={20} /></TitleIcon>
            <TitleIcon $ml={16}><svg width="20" height="18" viewBox="0 0 20 18"><path d="M1 1h6l2 2h10v14H1z" fill="none" stroke="#5f6368" strokeWidth="1.800" /><path d="M7 10h6M10 7l3 3-3 3" fill="none" stroke="#5f6368" strokeWidth="1.500" /></svg></TitleIcon>
            <TitleIcon $ml={19}><svg width="22" height="18" viewBox="0 0 22 18"><path d="M6 16a4.500 4.500 0 0 1 0-9 6 6 0 0 1 11.500 1.500A3.800 3.800 0 0 1 17 16z" fill="none" stroke="#5f6368" strokeWidth="1.800" /><path d="M8 11l2.500 2.500L14 9.500" fill="none" stroke="#5f6368" strokeWidth="1.500" /></svg></TitleIcon>
          </TitleRow>
          <MenuRow>
            <MenuWord $w={46}>File</MenuWord><MenuWord $w={48}>Edit</MenuWord><MenuWord $w={56}>View</MenuWord><MenuWord $w={64}>Insert</MenuWord><MenuWord $w={60}>Format</MenuWord>
          </MenuRow>
        </TitleBlock>
      </DocsHeadLeft>
      <DocsHeadRight>
        <HeadIcon><TrendingUp size={26} strokeWidth={2} /></HeadIcon>
        <HeadIcon $ml={38}><CommentIcon /></HeadIcon>
        <MeetPill><MeetLogo w={30} /><CaretDown $c="#1a73e8" /></MeetPill>
        <TurnIn>TURN IN</TurnIn>
        <ShareBtn><User size={22} fill="#fff" strokeWidth={2} />Share</ShareBtn>
        <Avatar $bg="#5c6bc0" $size={40} $fs={21} style={{ marginLeft: 24 }}>B</Avatar>
      </DocsHeadRight>
    </DocsHeader>
    <DocsMain>
      <DocsCol>
        <DocsToolbar>
          <ToolBtn $w={35}><Mat d={UNDO} /></ToolBtn>
          <ToolBtn $w={35}><Mat d={REDO} /></ToolBtn>
          <ToolBtn $w={35}><Mat d={PRINT} /></ToolBtn>
          <ToolBtn $w={35}><SpellIcon /></ToolBtn>
          <ToolBtn $w={35}><Mat d={PAINT} /></ToolBtn>
          <ToolSep $ml={6} />
          <ToolSelect $w={91} $pl={19} $pr={12}>100%<CaretDown /></ToolSelect>
          <ToolSep />
          <ToolSelect $w={142} $pl={20} $pr={12}>Normal text<CaretDown /></ToolSelect>
          <ToolSep />
          <ToolSelect $w={137} $pl={20} $pr={7}>Arial<CaretDown /></ToolSelect>
          <ToolBtn $w={32}><MoreHorizontal size={20} /></ToolBtn>
          <PencilBox><Pencil size={20} /><CaretDown $c="#1a73e8" /></PencilBox>
          <ToolSep $ml={9} />
          <ToolBtn $w={44}><ChevronUp size={24} strokeWidth={2.4} /></ToolBtn>
        </DocsToolbar>
        <RulerBar><RulerSvg /></RulerBar>
        <Scroller>
          <DocsTable />
          <GutterTools><Pin size={17} /><Plus size={18} strokeWidth={1.500} /></GutterTools>
          <ScrollTrack /><ScrollThumb />
          <BottomTrack><HThumb /></BottomTrack>
          <ExploreBtn><svg width="23" height="29" viewBox="0 0 23 29"><path d="M2 0h19a2 2 0 0 1 2 2v20a2 2 0 0 1-2 2h-6l-3.500 4L8 24H2a2 2 0 0 1-2-2V2a2 2 0 0 1 2-2z" fill="#5f6368" /><path d="M11.500 4c1 5 3 7 7.500 8-4.500 1-6.500 3-7.500 8-1-5-3-7-7.500-8 4.500-1 6.500-3 7.500-8z" fill="#fff" /></svg></ExploreBtn>
        </Scroller>
      </DocsCol>
      <SidePanel>
        <SideApp><svg width="25" height="25" viewBox="0 0 25 25"><rect width="25" height="25" rx="2" fill="#4285f4" /><rect x="5" y="5" width="15" height="15" fill="#fff" /><rect y="20" width="20" height="5" fill="#34a853" /><rect x="20" y="5" width="5" height="15" fill="#fbbc04" /><path d="M20 20h5l-5 5z" fill="#ea4335" /><text x="12.500" y="16.500" textAnchor="middle" fontSize="10" fontWeight="700" fill="#4285f4" fontFamily="Roboto">31</text></svg></SideApp>
        <SideApp><svg width="25" height="25" viewBox="0 0 25 25"><rect width="25" height="25" rx="2.500" fill="#fbbc04" /><circle cx="12.500" cy="10.500" r="5.500" fill="#fff" /><rect x="10" y="15" width="5" height="4" fill="#fff" /></svg></SideApp>
        <SideApp><svg width="25" height="25" viewBox="0 0 25 25"><circle cx="12" cy="13" r="9" fill="none" stroke="#1a73e8" strokeWidth="3" /><path d="M8 13l3 3 8-9" fill="none" stroke="#1a73e8" strokeWidth="3" /><circle cx="21" cy="4" r="2" fill="#1a73e8" /></svg></SideApp>
        <SideApp><svg width="25" height="25" viewBox="0 0 25 25"><circle cx="12.500" cy="12.500" r="12" fill="#1a73e8" /><circle cx="12.500" cy="9" r="3.500" fill="#fff" /><path d="M6 18c0-5 13-5 13 0z" fill="#fff" /></svg></SideApp>
        <SideApp><svg width="18" height="24" viewBox="0 0 18 24"><path d="M9 0a8 8 0 0 0-8 8c0 5 5 8 8 16 3-8 8-11 8-16a8 8 0 0 0-8-8z" fill="#34a853" /><path d="M3 3a8 8 0 0 1 6-3v5a3 3 0 0 0-2.300 1z" fill="#ea4335" /><path d="M9 0a8 8 0 0 1 7 4l-5 4a3 3 0 0 0-2-3z" fill="#4285f4" /><path d="M1 8a8 8 0 0 1 2-5l4 3a3 3 0 0 0-1 3z" fill="#fbbc04" /><circle cx="9" cy="8" r="3" fill="#fff" /></svg></SideApp>
        <SideDivider />
        <SideApp><Plus size={22} color="#5f6368" strokeWidth={1.500} /></SideApp>
        <SideChevron><ChevronRight size={20} /></SideChevron>
      </SidePanel>
    </DocsMain>
  </RightWin>
);

export default function App() {
  return (
    <Desktop>
      <Global />
      <WorkArea>
        <TabStrip $h={43} $pl={10} $pt={0}>
          <Tab $w={263} $fav={15} $close={12}><WheelFav /><TabTitle $gap={9}>View Schedule</TabTitle><TabClose /></Tab>
          <Tab $w={263} $active $fav={13} $close={12}><MeetLogo w={20} /><TabTitle $gap={12}>Meet – pxg-gyoo-wqx</TabTitle><RecDot /><TabClose /></Tab>
          <Tab $w={263} $sep $fav={12} $close={12}><ContactFav /><TabTitle $gap={12}>1631 GCH1002</TabTitle><TabClose /></Tab>
          <Tab $w={240} $fav={14} $close={12}><FaFacebook size={20} color="#1877f2" /><TabTitle $gap={10}>Facebook</TabTitle></Tab>
        </TabStrip>
        <NavBar $h={45} $pl={7}>
          <NavBtn $w={40} $faint><ArrowLeft size={20} /></NavBtn>
          <NavBtn $w={40} $faint><ArrowRight size={20} /></NavBtn>
          <NavBtn $w={40}><RotateCw size={20} /></NavBtn>
          <Omnibox $w={1400} $ml={8}><Lock size={14} fill="#5f6368" color="#5f6368" /><Url $ml={14} $fs={17.75}><b>meet.google.com</b>/pxg-gyoo-wqx</Url></Omnibox>
        </NavBar>
        <MeetBody>
          <PresenterBar><Avatar $bg="#c2185b" $size={30} $fs={15}>D</Avatar><PresenterText>Do Tien Thanh (FE Greenwich HN) is presenting</PresenterText></PresenterBar>
          <SharePanel><FoxitSection /></SharePanel>
          <BottomBar>
            <Clock>09:37</Clock><MeetDivider /><MeetCode>pxg-gyoo-wqx</MeetCode>
            <RoundBtn $red><MicOff size={20} /></RoundBtn>
            <RoundBtn $red><VideoOff size={22} /></RoundBtn>
            <RoundBtn><svg width="24" height="20" viewBox="0 0 24 20"><rect x="1" y="1" width="22" height="18" rx="2" fill="none" stroke="#fff" strokeWidth="2" /><path d="M10 8H6v4h4M18 8h-4v4h4" fill="none" stroke="#fff" strokeWidth="2" /></svg></RoundBtn>
            <RoundBtn><Hand size={26} /></RoundBtn>
            <RoundBtn><Square size={28} strokeWidth={1.800} /></RoundBtn>
          </BottomBar>
        </MeetBody>
      </WorkArea>
      <RightWindow />
      <Taskbar>
        <StartBtn><svg width="22" height="22" viewBox="0 0 22 22"><path d="M0 3l9-1.300V10H0zM10 1.500 22 0v10H10zM0 11h9v8.300L0 18zM10 11h12v11l-12-1.700z" fill="#fff" /></svg></StartBtn>
        <SearchBox>
          <Search size={21} strokeWidth={1.500} style={{ transform: "scaleX(-1)" }} />
          <SearchText>Type here to search</SearchText>
          <SearchArt>
            <svg width="100" height="50" viewBox="0 0 100 50"><circle cx="20" cy="15" r="6" fill="#f2d8d8" /><circle cx="25" cy="17" r="4" fill="#f2d8d8" /><path d="M38 6l2 5 3 1-3 1-2 6-2-6-3-1 3-1z" fill="#d878e8" /><circle cx="8" cy="29" r="2.500" fill="#f5a623" /><circle cx="74" cy="9" r="2.500" fill="#7fd0e8" /><path d="M40 42C42 26 48 16 53 16C58 16 62 28 64 42zM60 42C62 28 66 18 70 18C75 18 78 30 80 40zM76 40C78 28 83 20 88 20C94 20 98 28 100 36V40z" fill="#a8592a" /><path d="M20 46C22 34 26 28 31 28C36 28 38 38 40 46z" fill="#b4632c" /><path d="M24 36h13M23 41h16M45 26h15M43 33h19M64 26h11M62 33h16M81 28h14M79 34h20" stroke="#6b3515" strokeWidth="2" /><path d="M3 50c8-8 20-9 37-9 20-1 40-4 60-6v15z" fill="#d98a1e" /></svg>
          </SearchArt>
        </SearchBox>
        <TaskApp $w={60}><svg width="20" height="22" viewBox="0 0 20 22" fill="none" stroke="#fff" strokeWidth="1.300"><path d="M2 2h12M2 20h12M3 6h10v10H3z" /><path d="M17 2v2M17 7h2v8M17 18v2" /></svg></TaskApp>
        <TaskApp $w={64}><svg width="32" height="32" viewBox="0 0 32 32"><defs><linearGradient id="eg" x1="0" y1="0" x2="1" y2="1"><stop offset="0" stopColor="#35c1f1" /><stop offset=".6" stopColor="#2fc46e" /><stop offset="1" stopColor="#0c59a4" /></linearGradient></defs><circle cx="16" cy="16" r="15" fill="url(#eg)" /><path d="M1 17C3 8 14 6 20 11c3 3 3 6 0 7-4 1-2-5-8-4-5 2-4 10 2 14C7 30 1 24 1 17z" fill="#114a8b" /><path d="M31 18c0 3-4 5-7 4 3-2 2-4 0-4z" fill="#8be05a" /></svg></TaskApp>
        <TaskApp $w={64}><svg width="28" height="30" viewBox="0 0 28 30"><path d="M2 1h10l3 4h11v24H2z" fill="#ffd766" /><path d="M2 1h10l3 4H2z" fill="#e8a00b" /><path d="M9 18h11v11H9z" fill="#0f74d8" /><path d="M12 24h5v5h-5z" fill="#ffd766" /></svg></TaskApp>
        <TaskApp $w={61} $active><ChromeLogo s={34} /></TaskApp>
        <Tray>
          <TrayItem $w={33}><svg width="26" height="28" viewBox="0 0 26 28"><ellipse cx="13" cy="14" rx="12.500" ry="13.500" fill="#fff" /><ellipse cx="13" cy="14" rx="10.500" ry="11.500" fill="#1e88d4" /><text x="13" y="20" textAnchor="middle" fontFamily="Liberation Sans" fontWeight="700" fontSize="17" fill="#fff">?</text></svg></TrayItem>
          <TrayItem $w={34}><ChevronUp size={20} strokeWidth={1.300} /></TrayItem>
          <TrayItem $w={28}><svg width="14" height="22" viewBox="0 0 14 22" fill="none" stroke="#eee" strokeWidth="1.200"><rect x="1" y="5" width="12" height="12" rx="2" /><path d="M4 2h6M4 20h6" /><path d="M5 9v4l4-2z" /></svg></TrayItem>
          <TrayItem $w={29}><Mic size={22} strokeWidth={1.500} fill="#ddd" /></TrayItem>
          <TrayItem $w={32}><svg width="20" height="14" viewBox="0 0 20 14"><rect x=".5" y=".5" width="17" height="13" fill="none" stroke="#eee" /><rect x="3" y="3" width="7" height="8" fill="#eee" /><rect x="18" y="4" width="2" height="6" fill="#eee" /></svg></TrayItem>
          <TrayItem $w={30}><Wifi size={19} strokeWidth={1.300} style={{ transform: "rotate(45deg)" }} /></TrayItem>
          <TrayItem $w={28}><Volume1 size={22} strokeWidth={1.200} /></TrayItem>
          <TrayItem $w={48}>VIE</TrayItem>
          <TrayClock><span>9:37 AM</span><span>5/28/2022</span></TrayClock>
          <TrayItem $w={58}><MessageSquare size={24} strokeWidth={1.200} /></TrayItem>
        </Tray>
      </Taskbar>
    </Desktop>
  );
}
